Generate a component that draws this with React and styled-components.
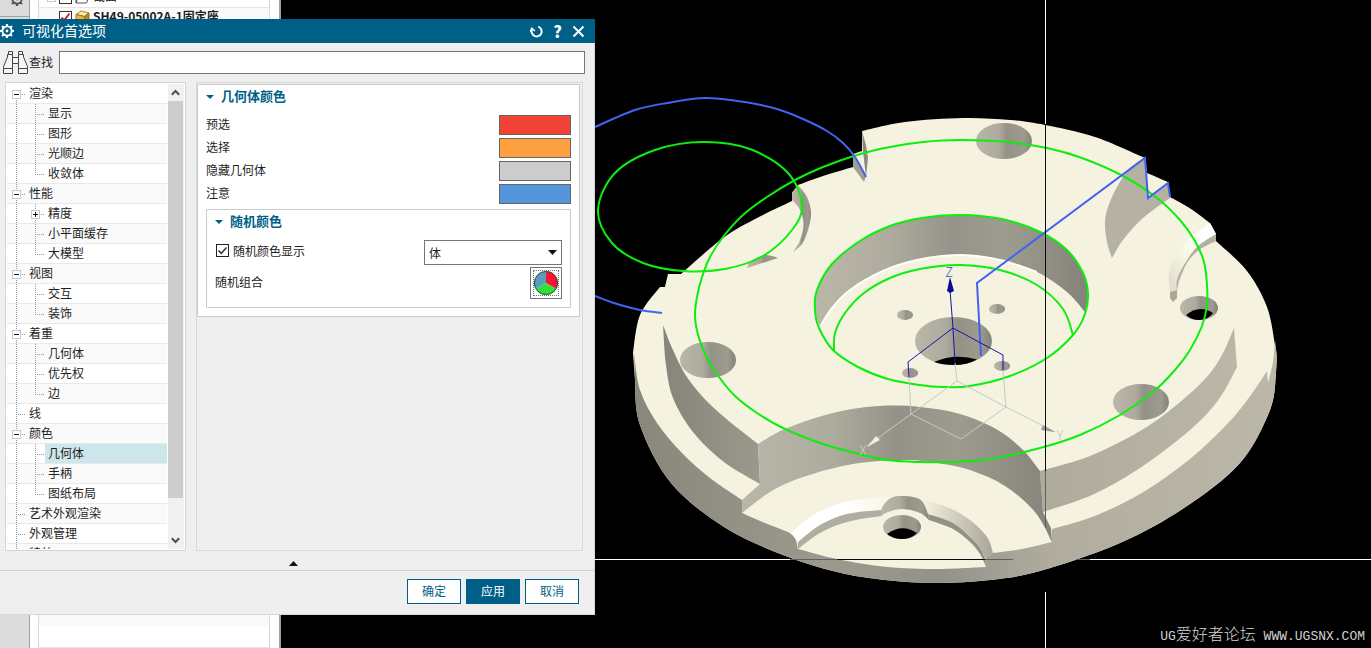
import React, { useState } from "react";
import styled, { createGlobalStyle } from "styled-components";

const GlobalStyle = createGlobalStyle`
  * {
    box-sizing: border-box;
  }
  body {
    margin: 0;
    background: #000;
    color: #1e1e1e;
    font-family: "Noto Sans CJK SC", sans-serif;
    font-size: 12px;
  }
  button, input, select {
    font: inherit;
    color: inherit;
  }
  button {
    cursor: pointer;
  }
`;

const treeData = [
  { id: "render", label: "渲染", children: ["显示", "图形", "光顺边", "收敛体"] },
  { id: "perf", label: "性能", children: ["精度", "小平面缓存", "大模型"] },
  { id: "view", label: "视图", children: ["交互", "装饰"] },
  { id: "emphasis", label: "着重", children: ["几何体", "优先权", "边"] },
  { id: "line", label: "线" },
  { id: "color", label: "颜色", children: ["几何体", "手柄", "图纸布局"] },
  { id: "art", label: "艺术外观渲染" },
  { id: "looks", label: "外观管理" },
  { id: "effects", label: "特效" },
];

const swatches = [
  { label: "预选", color: "#f04336" },
  { label: "选择", color: "#ffa040" },
  { label: "隐藏几何体", color: "#cccccc" },
  { label: "注意", color: "#5396dc" },
];

/* ---------- icons ---------- */

const Gear = ({ size = 14, color = "#fff" }) => (
  <svg width={size} height={size} viewBox="0 0 14 14" fill="none">
    <circle cx="7" cy="7" r="4.6" stroke={color} strokeWidth="1.8" />
    <circle cx="7" cy="7" r="1.4" fill={color} />
    {[0, 45, 90, 135, 180, 225, 270, 315].map((a) => (
      <path key={a} d="M5.9 0h2.2v2.4H5.9z" fill={color} transform={`rotate(${a} 7 7)`} />
    ))}
  </svg>
);

const Binoculars = () => (
  <svg width="25" height="23" viewBox="0 0 25 23" fill="#f5f5f5" stroke="#444">
    <path d="M4.5 3.5H9.5V17.5H.5V15.5L4.5 6Z" />
    <path d="M15.5 3.5H20.5V6L24.5 15.5V17.5H15.5Z" />
    <path d="M5.5 .5H9.5V3.5H5.5ZM15.5 .5H19.5V3.5H15.5Z" />
    <path d="M.5 17.5H9.5V22.5H.5ZM15.5 17.5H24.5V22.5H15.5Z" />
    <path d="M9.5 6.500H15.5V12.5H9.5Z" />
  </svg>
);

const ResetIcon = () => (
  <svg width="13" height="13" viewBox="0 0 13 13" fill="none" stroke="#fff" strokeWidth="1.9">
    <path d="M8.2 1.7A5 5 0 1 1 2 4.6" />
    <path d="M0 6.8L1.8 3.2L4.9 6" strokeWidth="1.5" />
  </svg>
);

const CloseIcon = () => (
  <svg width="13" height="13" viewBox="0 0 13 13" stroke="#fff" strokeWidth="2">
    <path d="M1.5 1.5L11.5 11.5M11.5 1.5L1.5 11.5" />
  </svg>
);

const Arrow = ({ up, color = "#111", width = 9, height = 5 }) => (
  <svg width={width} height={height} viewBox="0 0 10 5" preserveAspectRatio="none">
    <path d={up ? "M0 5L5 0L10 5Z" : "M0 0L5 5L10 0Z"} fill={color} />
  </svg>
);

const Chevron = ({ up }) => (
  <svg width="9" height="7" viewBox="0 0 9 7" fill="none" stroke="#505050" strokeWidth="2">
    <path d={up ? "M.8 5.8L4.5 2L8.2 5.8" : "M.8 1.2L4.5 5L8.2 1.2"} />
  </svg>
);

const ColorWheel = () => (
  <svg width="26" height="26" viewBox="0 0 26 26">
    <path d="M13 13V1A12 12 0 0 1 23.4 19Z" fill="#fa142d" />
    <path d="M13 13L23.4 19A12 12 0 0 1 2.6 19Z" fill="#2fe236" />
    <path d="M13 13L2.6 19A12 12 0 0 1 13 1Z" fill="#559fba" />
    <circle cx="13" cy="13" r="11.5" fill="none" stroke="#3c4a50" />
  </svg>
);

const CubeIcon = () => (
  <svg width="15" height="14" viewBox="0 0 15 14" stroke="#8a6410" strokeWidth=".8">
    <path d="M1 4.5L6 1L14 3L9.5 6.5Z" fill="#ffe9a0" />
    <path d="M1 4.5L9.5 6.5V13.5L1 11Z" fill="#f3b62c" />
    <path d="M9.5 6.5L14 3V10L9.5 13.5Z" fill="#c8850c" />
  </svg>
);

const FolderIcon = () => (
  <svg width="15" height="14" viewBox="0 0 15 14" fill="#fff" stroke="#555">
    <path d="M1 13L4 5H14.5L11.5 13ZM1 13V3H6" />
  </svg>
);

/* ---------- model drawing ---------- */

// smooth curve through a list of points
const curve = (pts, closed) => {
  const n = pts.length;
  const at = (i) => (closed ? pts[(i + n) % n] : pts[Math.max(0, Math.min(n - 1, i))]);
  let d = `${pts[0][0]} ${pts[0][1]}`;
  for (let i = 0; i < (closed ? n : n - 1); i++) {
    const [a, b, c, e] = [at(i - 1), at(i), at(i + 1), at(i + 2)];
    d += `C${b[0] + (c[0] - a[0]) / 6} ${b[1] + (c[1] - a[1]) / 6} ${c[0] - (e[0] - b[0]) / 6} ${
      c[1] - (e[1] - b[1]) / 6
    } ${c[0]} ${c[1]}`;
  }
  return d;
};

// closed shape made of several smooth runs joined by sharp corners
const shape = (...runs) => `M${runs.map((r) => curve(r)).join("L")}Z`;
const open = (pts) => `M${curve(pts)}`;
const loop = (pts) => `M${curve(pts, true)}Z`;

const silhouette = [
  [1276, 373], [1270, 410], [1240, 463], [1184, 508], [1120, 543], [1040, 571], [990, 580],
  [937, 583], [885, 580], [837, 572], [783, 555], [724, 527], [671, 483], [640, 425], [635, 380],
];
const bodyPath = shape(
  [[862, 131], [905, 122], [963, 118], [1010, 120], [1045, 125], [1095, 137], [1145, 158]],
  [[1147, 173], [1168, 182]],
  [[1170, 197], [1191, 209], [1210, 223]],
  [[1216, 234], [1216, 241]],
  [[1216, 241], [1247, 271], [1267, 307], [1275, 345]],
  [[1277, 357], [1276, 373]],
  silhouette,
  [[633, 353], [640, 315], [660, 287]],
  [[665, 287], [668, 274]],
  [[681, 274], [723, 238], [757, 218], [792, 201]],
  [[792, 193], [798, 185]],
  [[798, 185], [823, 176], [853, 167]],
  [[853, 154], [862, 151]]
);
const outerWall = shape(
  [[634, 353], [640, 390], [657, 423], [682, 453], [710, 478], [742, 500]],
  [[742, 513], [765, 523], [788, 532]],
  [[788, 532], [795, 538], [798, 549]],
  [[798, 549], [837, 559], [887, 567], [937, 569], [986, 567]],
  [[985, 559], [993, 553]],
  [[993, 553], [1022, 549], [1052, 542]],
  [[1052, 529], [1092, 517], [1140, 494], [1190, 459], [1230, 421], [1253, 392], [1267, 371]],
  [[1268, 383], [1273, 362], [1275, 340]],
  [[1277, 357], [1276, 373]],
  silhouette
);
const leftStep = shape(
  [[663, 325], [673, 350], [689, 380], [716, 410], [758, 444]],
  [[760, 484], [724, 462], [693, 432], [673, 398], [666, 365], [663, 325]]
);
const rightStep = shape(
  [[1040, 471], [1090, 456], [1140, 431], [1174, 407], [1205, 379], [1222, 355], [1234, 328]],
  [[1237, 367], [1219, 399], [1190, 430], [1140, 468], [1092, 495], [1043, 512]]
);
const pocketWall = shape(
  [[758, 444], [787, 428], [837, 412], [880, 406], [920, 407], [960, 414], [996, 429], [1022, 449], [1040, 471]],
  [[1043, 512], [1051, 528]],
  [[1052, 542], [1035, 512], [1005, 486], [970, 470], [937, 463], [903, 460], [853, 464],
    [803, 477], [770, 492], [742, 513]],
  [[742, 500], [760, 484]]
);
const boreWall = shape(
  [[820, 327], [815, 310], [817, 290], [832, 264], [860, 241], [890, 226], [922, 218], [960, 215],
    [1002, 219], [1040, 232], [1067, 250], [1083, 273], [1088, 293], [1085, 312]],
  [[1085, 312], [1067, 292], [1037, 272], [1000, 260], [960, 255], [917, 260], [883, 271],
    [850, 290], [832, 308], [820, 327]]
);
const boreEdge = open([[820, 327], [832, 308], [850, 290], [883, 271], [917, 260], [960, 255], [1000, 260], [1037, 272]]);

const greenLines = [
  loop([[703, 142], [750, 149], [788, 173], [802, 205], [792, 230], [763, 256], [725, 269],
    [683, 271], [643, 263], [612, 243], [598, 210], [615, 173], [655, 150]]),
  loop([[960, 140], [1007, 142], [1047, 148], [1082, 158], [1123, 176], [1157, 198], [1180, 220],
    [1195, 241], [1204, 262], [1207, 285], [1207, 305], [1202, 326], [1190, 350], [1175, 370],
    [1153, 392], [1120, 415], [1080, 435], [1040, 448], [990, 459], [950, 462], [920, 462],
    [887, 460], [855, 453], [820, 443], [783, 428], [757, 413], [735, 396], [719, 377], [707, 358],
    [699, 338], [695, 317], [697, 297], [702, 277], [710, 257], [723, 237], [743, 215], [767, 197],
    [795, 180], [823, 167], [857, 155], [890, 147], [923, 142]]),
  loop([[960, 215], [1002, 219], [1040, 232], [1067, 250], [1083, 273], [1088, 293], [1085, 314],
    [1073, 335], [1047, 358], [1010, 376], [970, 386], [943, 387], [920, 385], [888, 379],
    [858, 367], [833, 350], [819, 328], [815, 310], [817, 290], [832, 264], [860, 241], [890, 226], [922, 218]]),
  open([[834, 350], [835, 333], [845, 313], [864, 293], [890, 278], [920, 269], [960, 265],
    [1000, 270], [1037, 285], [1063, 309], [1073, 335]]),
];

const Model = () => (
  <svg viewBox="281 0 1090 648" preserveAspectRatio="xMinYMin slice" role="img" aria-label="固定座">
    <defs>
      <linearGradient id="hole">
        <stop offset="0" stopColor="#bab7a9" />
        <stop offset=".4" stopColor="#aeab9e" />
        <stop offset=".55" stopColor="#949186" />
        <stop offset=".85" stopColor="#9d9a8e" />
        <stop offset="1" stopColor="#848178" />
      </linearGradient>
      <linearGradient id="bore">
        <stop offset="0" stopColor="#bab7a9" />
        <stop offset=".25" stopColor="#b0ada0" />
        <stop offset=".5" stopColor="#96938a" />
        <stop offset=".7" stopColor="#9e9b8f" />
        <stop offset="1" stopColor="#85827a" />
      </linearGradient>
      <linearGradient id="pocket">
        <stop offset="0" stopColor="#bab7aa" />
        <stop offset=".3" stopColor="#adaa9e" />
        <stop offset=".5" stopColor="#949186" />
        <stop offset=".7" stopColor="#9d9a8e" />
        <stop offset="1" stopColor="#86837a" />
      </linearGradient>
      <linearGradient id="outer">
        <stop offset="0" stopColor="#89867b" />
        <stop offset=".3" stopColor="#9c998d" />
        <stop offset=".48" stopColor="#94918a" />
        <stop offset=".65" stopColor="#b0ad9f" />
        <stop offset="1" stopColor="#bbb8a9" />
      </linearGradient>
      <linearGradient id="leftStep">
        <stop offset="0" stopColor="#87847a" />
        <stop offset="1" stopColor="#9b988c" />
      </linearGradient>
      <linearGradient id="rightStep">
        <stop offset="0" stopColor="#aeab9d" />
        <stop offset="1" stopColor="#bab7a8" />
      </linearGradient>
      <linearGradient id="chamferL">
        <stop offset="0" stopColor="#fff" />
        <stop offset=".5" stopColor="#fff" />
        <stop offset="1" stopColor="#f8f5e2" />
      </linearGradient>
      <linearGradient id="chamferR">
        <stop offset="0" stopColor="#f5f2e0" />
        <stop offset=".7" stopColor="#c0bdaf" />
        <stop offset="1" stopColor="#a8a598" />
      </linearGradient>
      <linearGradient id="chamferTop" x1="0" y1="1" x2="1" y2="0">
        <stop offset="0" stopColor="#ded9ca" />
        <stop offset=".5" stopColor="#fbf9e8" />
        <stop offset=".75" stopColor="#fff" />
      </linearGradient>
    </defs>

    <path d={bodyPath} fill="#f5f2e0" />
    <path d={outerWall} fill="url(#outer)" />
    <path d={leftStep} fill="url(#leftStep)" />
    <path d={rightStep} fill="url(#rightStep)" />
    <path d={pocketWall} fill="url(#pocket)" />
    <path d={boreWall} fill="url(#bore)" />
    <path d={boreEdge} fill="none" stroke="#fffef8" strokeWidth="2" />

    {/* notch at the upper left of the rim */}
    <path d="M862 131L866 145L868 158L866 177L863 151Z" fill="#8d8a7f" />
    <path d="M853 154L866 176L864 182L853 167Z" fill="#a19e92" />
    <path
      d={shape(
        [[798, 185], [807, 197], [811, 213], [808, 230], [802, 244], [793, 252]],
        [[799, 243], [803, 230], [803, 219], [799, 208], [792, 200]],
        [[792, 193], [798, 185]]
      )}
      fill="url(#hole)"
    />
    <path d={shape([[747, 268], [750, 262], [758, 257], [767, 255], [778, 258]])} fill="url(#hole)" />

    {/* stepped cut on the right */}
    <path
      d={shape(
        [[1145, 158], [1130, 168], [1117, 187], [1107, 210], [1105, 227], [1108, 246], [1112, 258]],
        [[1112, 258], [1123, 240], [1143, 218], [1170, 198]],
        [[1168, 183], [1148, 198]]
      )}
      fill="#b5b2a4"
    />
    <path
      d={shape(
        [[1210, 223], [1190, 238], [1177, 254], [1169, 272], [1170, 293]],
        [[1177, 291], [1178, 280], [1184, 265], [1197, 247], [1216, 234]]
      )}
      fill="url(#chamferTop)"
    />
    <path
      d={shape(
        [[1216, 234], [1197, 247], [1184, 265], [1177, 280], [1177, 291]],
        [[1179, 281], [1187, 263], [1199, 250], [1216, 241]]
      )}
      fill="#b3b0a2"
    />
    <path d="M1170 292L1177 290V298L1173 302L1170 298Z" fill="#aaa799" />

    {/* front recess */}
    <path
      d={shape(
        [[791, 533], [810, 517], [837, 504], [863, 499], [893, 497]],
        [[881, 510], [847, 514], [820, 525], [798, 542]]
      )}
      fill="url(#chamferL)"
    />
    <path
      d={shape(
        [[798, 542], [820, 525], [847, 514], [881, 510]],
        [[881, 516], [847, 522], [820, 533], [798, 549]]
      )}
      fill="#b0ada1"
    />
    <path
      d={shape(
        [[922, 500], [947, 507], [970, 520], [987, 537], [993, 553]],
        [[985, 559], [980, 548], [970, 537], [953, 523], [928, 514]]
      )}
      fill="url(#chamferR)"
    />
    <path
      d={shape(
        [[928, 514], [953, 523], [970, 537], [980, 548], [985, 559]],
        [[986, 567], [980, 554], [970, 542], [953, 529], [929, 520]]
      )}
      fill="#939085"
    />
    <path
      d={shape(
        [[881, 510], [885, 503], [893, 497], [903, 496], [913, 497], [922, 501], [928, 514]],
        [[929, 520], [920, 513], [903, 509], [888, 512], [881, 516]]
      )}
      fill="url(#hole)"
    />

    {/* holes */}
    <ellipse cx="1004" cy="141" rx="28" ry="18" fill="url(#hole)" />
    <ellipse cx="708" cy="360" rx="28" ry="18" fill="url(#hole)" />
    <ellipse cx="1141" cy="402" rx="28" ry="18" fill="url(#hole)" />
    <ellipse cx="1199" cy="308" rx="19" ry="12" fill="url(#hole)" />
    <path d="M1186 315Q1199 304 1213 313Q1208 320 1199 320Q1191 320 1186 315Z" fill="#000" />
    <ellipse cx="902" cy="527" rx="19" ry="12" fill="url(#hole)" />
    <path d="M887 534Q902 523 917 533Q911 539 902 539Q893 539 887 534Z" fill="#000" />
    <ellipse cx="953.5" cy="341" rx="38.5" ry="24" fill="url(#hole)" />
    <path d="M934 362Q955 353 977 359.5Q967 365 954 365Q942 365 934 362Z" fill="#000" />
    {[[905, 315], [997, 309], [910, 373], [1002, 366]].map(([x, y]) => (
      <ellipse key={x} cx={x} cy={y} rx="8" ry="5" fill="url(#hole)" />
    ))}

    {/* sketch curves */}
    <g fill="none" stroke="#0cee0c" strokeWidth="2">
      {greenLines.map((d) => (
        <path key={d} d={d} />
      ))}
    </g>
    <g fill="none" stroke="#4462f0" strokeWidth="2">
      <path
        d={open([[595, 127], [635, 110], [667, 103], [705, 98], [745, 102], [777, 109],
          [803, 119], [827, 131], [843, 143], [855, 157], [866, 177]])}
      />
      <path d={open([[595, 296], [617, 304], [640, 310], [662, 313]])} />
      <path d="M981 356L977 283L1145 158L1148 198L1168 183L1170 197" />
    </g>

    {/* coordinate system */}
    <g fill="none" stroke="#c8c8cc">
      <path d="M955 363L957 381L911 414L867 446M957 381L1006 407L1055 432" />
      <path d="M909 377L911 414L961 439L1006 407L1003 370" />
    </g>
    <path d="M867 447L876 436L880 440Z" fill="#eee" />
    <path d="M1055 432L1043 425L1041 430Z" fill="#999" />
    <path d="M950 290L953 328L955 363M909 377L908 362L953 328L1003 355V370" fill="none" stroke="#1414aa" />
    <path d="M950 277L954 291L950 293L947 291Z" fill="#0a0a96" />
    <g fontFamily="'Noto Sans CJK SC', sans-serif" fontSize="13" fontWeight="300" textAnchor="middle">
      <text x="949" y="277" fill="#3c50d2">Z</text>
      <text x="863" y="455" fill="#cdcdd0">X</text>
      <text x="1060" y="440" fill="#c3c3c8">Y</text>
    </g>

    {/* cursor cross */}
    <g shapeRendering="crispEdges">
      <path d="M1045.5 0V124M1045.5 592V648M595 559.5H790M1090 559.5H1371" stroke="#fff" />
      <path d="M1045.5 124V471M837 559.5H985" stroke="#0a0a14" />
      <path d="M1045.5 471V528M790 559.5H837M985 559.5H1013M1078 559.5H1090" stroke="#5c5e68" />
    </g>
  </svg>
);

/* ---------- app ---------- */

const PreferenceTree = () => {
  const [closed, setClosed] = useState({});
  const [selected, setSelected] = useState("color/几何体");
  const toggle = (id) => setClosed({ ...closed, [id]: !closed[id] });

  return (
    <TreePanel>
      <TreeList>
        {treeData.map((group, g) => (
          <React.Fragment key={group.id}>
            <TreeRow>
              <Branch $first={g === 0}>
                {group.children && (
                  <Expander
                    $plus={closed[group.id]}
                    aria-label={group.label}
                    onClick={() => toggle(group.id)}
                  />
                )}
              </Branch>
              <TreeLabel $active={selected === group.id} onClick={() => setSelected(group.id)}>
                {group.label}
              </TreeLabel>
            </TreeRow>
            {!closed[group.id] &&
              (group.children || []).map((name, i) => {
                const id = `${group.id}/${name}`;
                return (
                  <TreeRow key={id}>
                    <Branch $through />
                    <Branch $last={i === group.children.length - 1}>
                      {name === "精度" && <Expander $plus aria-label={name} />}
                    </Branch>
                    <TreeLabel $active={selected === id} onClick={() => setSelected(id)}>
                      {name}
                    </TreeLabel>
                  </TreeRow>
                );
              })}
          </React.Fragment>
        ))}
      </TreeList>
      <ScrollBar>
        <ScrollButton aria-label="向上"><Chevron up /></ScrollButton>
        <ScrollTrack><ScrollThumb /></ScrollTrack>
        <ScrollButton aria-label="向下"><Chevron /></ScrollButton>
      </ScrollBar>
    </TreePanel>
  );
};

const App = () => {
  const [random, setRandom] = useState(true);

  return (
    <Page>
      <GlobalStyle />
      <Rail>
        <RailTab aria-label="设置"><Gear size={14} color="#555" /></RailTab>
      </Rail>
      <Navigator>
        <NavList>
          <NavRow>
            <Expander $plus aria-label="截面" />
            <NavCheck />
            <FolderIcon />
            <span>截面</span>
          </NavRow>
          <NavRow $bold>
            <NavCheck>
              <svg width="11" height="11" viewBox="0 0 11 11" fill="none" stroke="#d8142c" strokeWidth="2">
                <path d="M1.5 5.5L4 8.5L9.5 1.5" />
              </svg>
            </NavCheck>
            <CubeIcon />
            <span>SH49-05002A-1固定座</span>
          </NavRow>
        </NavList>
      </Navigator>
      <Viewport>
        <Model />
        <Watermark>
          <span>UG</span>爱好者论坛<span> WWW.UGSNX.COM</span>
        </Watermark>
      </Viewport>

      <Dialog role="dialog" aria-label="可视化首选项">
        <TitleBar>
          <Gear />
          <h1>可视化首选项</h1>
          <TitleButton aria-label="重置"><ResetIcon /></TitleButton>
          <TitleButton>?</TitleButton>
          <TitleButton aria-label="关闭"><CloseIcon /></TitleButton>
        </TitleBar>
        <SearchRow>
          <Binoculars />
          <FieldLabel htmlFor="find">查找</FieldLabel>
          <SearchInput id="find" type="text" />
        </SearchRow>
        <Body>
          <PreferenceTree />
          <Content>
            <Group>
              <GroupTitle>
                <Arrow color="#005f87" width={8} height={4} />
                <span>几何体颜色</span>
              </GroupTitle>
              <SwatchList>
                {swatches.map(({ label, color }, i) => (
                  <FieldRow key={label}>
                    <FieldLabel htmlFor={`swatch-${i}`}>{label}</FieldLabel>
                    <Swatch id={`swatch-${i}`} $color={color} />
                  </FieldRow>
                ))}
              </SwatchList>
              <Group $nested>
                <GroupTitle>
                  <Arrow color="#005f87" width={8} height={4} />
                  <span>随机颜色</span>
                </GroupTitle>
                <FieldList>
                  <FieldRow>
                    <CheckLabel>
                      <CheckBox>
                        <input
                          type="checkbox"
                          checked={random}
                          onChange={(e) => setRandom(e.target.checked)}
                        />
                        {random && (
                          <svg width="13" height="13" viewBox="0 0 13 13" fill="none" stroke="#333" strokeWidth="1.5">
                            <path d="M2.5 6.5L5.3 9.3L10.5 3.5" />
                          </svg>
                        )}
                      </CheckBox>
                      随机颜色显示
                    </CheckLabel>
                    <SelectBox>
                      <select aria-label="随机颜色显示">
                        <option>体</option>
                        <option>面</option>
                      </select>
                      <Arrow width={9} height={5} />
                    </SelectBox>
                  </FieldRow>
                  <FieldRow>
                    <FieldLabel htmlFor="shuffle">随机组合</FieldLabel>
                    <WheelButton id="shuffle">
                      <ColorWheel />
                    </WheelButton>
                  </FieldRow>
                </FieldList>
              </Group>
            </Group>
          </Content>
        </Body>
        <CollapseBar aria-label="折叠"><Arrow up width={9} height={5} /></CollapseBar>
        <Footer>
          <ActionButton>确定</ActionButton>
          <ActionButton $primary>应用</ActionButton>
          <ActionButton>取消</ActionButton>
        </Footer>
      </Dialog>
    </Page>
  );
};

const Page = styled.div`
  position: relative;
  display: flex;
  min-height: 100vh;
  overflow: hidden;
`;

const Rail = styled.div`
  flex: 0 0 30px;
  background: #dcdcdc;
  border-right: 1px solid #a0a0a0;
`;

const RailTab = styled.button`
  display: flex;
  align-items: flex-start;
  justify-content: flex-end;
  width: 100%;
  height: 17px;
  padding: 0 5px 0 0;
  overflow: hidden;
  border: none;
  border-bottom: 1px solid #a0a0a0;
  background: #dcdcdc;
  svg {
    margin-top: -8px;
  }
`;

const Navigator = styled.div`
  display: flex;
  flex: 0 0 251px;
  padding: 0 9px 0 8px;
  overflow: hidden;
  background: #fff;
  border-right: 2px solid #a0a0a0;
`;

const NavList = styled.div`
  flex: 1;
  margin-top: -13px;
  border: 1px solid #d8d8d8;
  border-width: 0 1px;
  background: repeating-linear-gradient(
    #fff 0 20px,
    #e6e6e6 20px 21px,
    #fafafa 21px 40px,
    #e6e6e6 40px 41px
  );
  background-size: 100% 40px;
`;

const NavRow = styled.div`
  display: flex;
  align-items: center;
  gap: 3px;
  height: 20px;
  padding-left: ${(p) => (p.$bold ? "20px" : "8px")};
  font-weight: ${(p) => (p.$bold ? 700 : 400)};
  line-height: 18px;
  white-space: nowrap;
  span:last-child {
    padding-bottom: 2px;
  }
`;

const NavCheck = styled.span`
  display: grid;
  place-items: center;
  width: 13px;
  height: 13px;
  border: 1px solid #333;
  background: #fff;
`;

const Viewport = styled.main`
  position: relative;
  flex: 1;
  height: 100vh;
  min-width: 0;
  background: #000;
  > svg {
    display: block;
    width: 100%;
    height: 100%;
  }
`;

const Watermark = styled.div`
  position: absolute;
  right: 6px;
  bottom: 0;
  color: #d2d2d2;
  font-size: 16px;
  line-height: 22px;
  font-weight: 300;
  white-space: pre;
  span {
    font-family: "Liberation Mono", monospace;
    font-size: 13px;
  }
`;

const Dialog = styled.section`
  position: absolute;
  top: 19px;
  left: 0;
  width: 595px;
  background: #efefef;
  border: 1px solid #d8d8d8;
  border-width: 0 1px 1px 0;
`;

const TitleBar = styled.header`
  display: flex;
  align-items: center;
  gap: 6px;
  height: 24px;
  margin-right: -1px;
  padding-right: 9px;
  background: #005f87;
  color: #fff;
  h1 {
    flex: 1;
    margin: 0 0 0 2px;
    padding-bottom: 2px;
    font-size: 14px;
    line-height: 22px;
    font-weight: 400;
  }
`;

const TitleButton = styled.button`
  display: flex;
  align-items: center;
  justify-content: center;
  width: 15px;
  height: 24px;
  padding: 0;
  border: none;
  background: none;
  color: #fff;
  font-size: 16px;
  font-weight: 900;
`;

const SearchRow = styled.div`
  display: flex;
  align-items: center;
  gap: 1px;
  padding: 8px 9px 8px 3px;
`;

const SearchInput = styled.input`
  flex: 1;
  height: 23px;
  min-width: 0;
  margin-left: 5px;
  padding: 0 4px;
  border: 1px solid #767676;
  background: #fff;
`;

const Body = styled.div`
  display: flex;
  gap: 10px;
  height: 469px;
  padding: 0 11px 0 5px;
`;

const TreePanel = styled.div`
  display: flex;
  gap: 1px;
  flex: 0 0 181px;
  padding: 1px;
  border: 1px solid #d4d4d4;
  background: #fff;
`;

const TreeList = styled.div`
  flex: 1;
  overflow: hidden;
`;

const TreeRow = styled.div`
  display: flex;
  height: 20px;
  border-bottom: 1px solid #e9e9e9;
  background: #fff;
  &:nth-child(even) {
    background: #fafafa;
  }
`;

const Branch = styled.div`
  flex: 0 0 19px;
  height: 20px;
  padding: 6px 0 0 5px;
  line-height: 0;
  background-image: ${(p) =>
    `${p.$through ? "none" : "repeating-linear-gradient(90deg, #999 0 1px, transparent 1px 2px)"},
    repeating-linear-gradient(#999 0 1px, transparent 1px 2px)`};
  background-repeat: no-repeat;
  background-position: 9px 10px, 9px ${(p) => (p.$first ? "10px" : "0")};
  background-size: 9px 1px, 1px ${(p) => (p.$last ? "10px" : "20px")};
`;

const Expander = styled.button`
  width: 9px;
  height: 9px;
  padding: 0;
  border: 1px solid #c8c8c8;
  background:
    linear-gradient(#111, #111) center / 5px 1px no-repeat,
    linear-gradient(#111, #111) center / ${(p) => (p.$plus ? "1px 5px" : "0 0")} no-repeat,
    #fff;
`;

const TreeLabel = styled.button`
  flex: 1;
  height: 19px;
  padding: 0 0 2px 3px;
  border: none;
  background: ${(p) => (p.$active ? "#cde6eb" : "transparent")};
  line-height: 17px;
  text-align: left;
  white-space: nowrap;
`;

const ScrollBar = styled.div`
  display: flex;
  flex-direction: column;
  flex: 0 0 16px;
  background: #f0f0f0;
`;

const ScrollButton = styled.button`
  display: flex;
  align-items: center;
  justify-content: center;
  height: 17px;
  padding: 0 1px 0 0;
  border: none;
  background: none;
`;

const ScrollTrack = styled.div`
  flex: 1;
  padding-right: 1px;
`;

const ScrollThumb = styled.div`
  height: 92%;
  background: #cdcdcd;
`;

const Content = styled.div`
  flex: 1;
  min-width: 0;
  padding: 1px 2px 1px 0;
  border: 1px solid #d8d8d8;
`;

const Group = styled.div`
  margin-top: ${(p) => (p.$nested ? "5px" : "0")};
  padding: 0 8px 8px;
  border: 1px solid #cbcbcb;
  border-radius: 1px;
  background: #fff;
`;

const GroupTitle = styled.h2`
  display: flex;
  align-items: center;
  gap: 7px;
  height: 24px;
  margin: 0 0 6px;
  color: #005f87;
  font-size: 13px;
  font-weight: 700;
  span {
    padding-bottom: 4px;
  }
`;

const SwatchList = styled.div`
  display: grid;
  gap: 3px;
`;

const FieldList = styled.div`
  display: grid;
  gap: 2px;
`;

const FieldRow = styled.div`
  display: flex;
  align-items: center;
  justify-content: space-between;
`;

const FieldLabel = styled.label`
  padding-bottom: 2px;
  line-height: 18px;
`;

const Swatch = styled.button`
  width: 72px;
  height: 20px;
  border: 1px solid #666;
  background: ${(p) => p.$color};
`;

const CheckLabel = styled.label`
  display: flex;
  align-items: center;
  gap: 4px;
  padding: 0 0 4px 1px;
`;

const CheckBox = styled.span`
  display: grid;
  input, svg {
    grid-area: 1 / 1;
  }
  input {
    appearance: none;
    width: 13px;
    height: 13px;
    margin: 0;
    border: 1px solid #222;
    background: #fff;
  }
  svg {
    pointer-events: none;
  }
`;

const SelectBox = styled.span`
  display: grid;
  align-items: center;
  width: 138px;
  select, svg {
    grid-area: 1 / 1;
  }
  select {
    appearance: none;
    width: 100%;
    height: 25px;
    padding: 0 20px 0 4px;
    border: 1px solid #767676;
    border-radius: 0;
    background: #fff;
  }
  svg {
    justify-self: end;
    margin-right: 5px;
    pointer-events: none;
  }
`;

const WheelButton = styled.button`
  display: grid;
  place-items: center;
  width: 32px;
  height: 32px;
  padding: 0;
  border: 1px solid #767676;
  background: #fff;
  svg {
    outline: 1px dotted #777;
    outline-offset: -1px;
  }
`;

const CollapseBar = styled.button`
  display: flex;
  align-items: center;
  justify-content: center;
  width: 100%;
  height: 20px;
  padding: 5px 12px 0 4px;
  border: none;
  border-bottom: 1px solid #d0d0d0;
  background: none;
`;

const Footer = styled.footer`
  display: flex;
  justify-content: flex-end;
  gap: 5px;
  padding: 8px 15px 10px;
`;

const ActionButton = styled.button`
  width: 54px;
  height: 25px;
  padding: 0 0 2px;
  border: 1px solid #005f87;
  background: ${(p) => (p.$primary ? "#005f87" : "#fff")};
  color: ${(p) => (p.$primary ? "#fff" : "#005f87")};
`;

export default App;
